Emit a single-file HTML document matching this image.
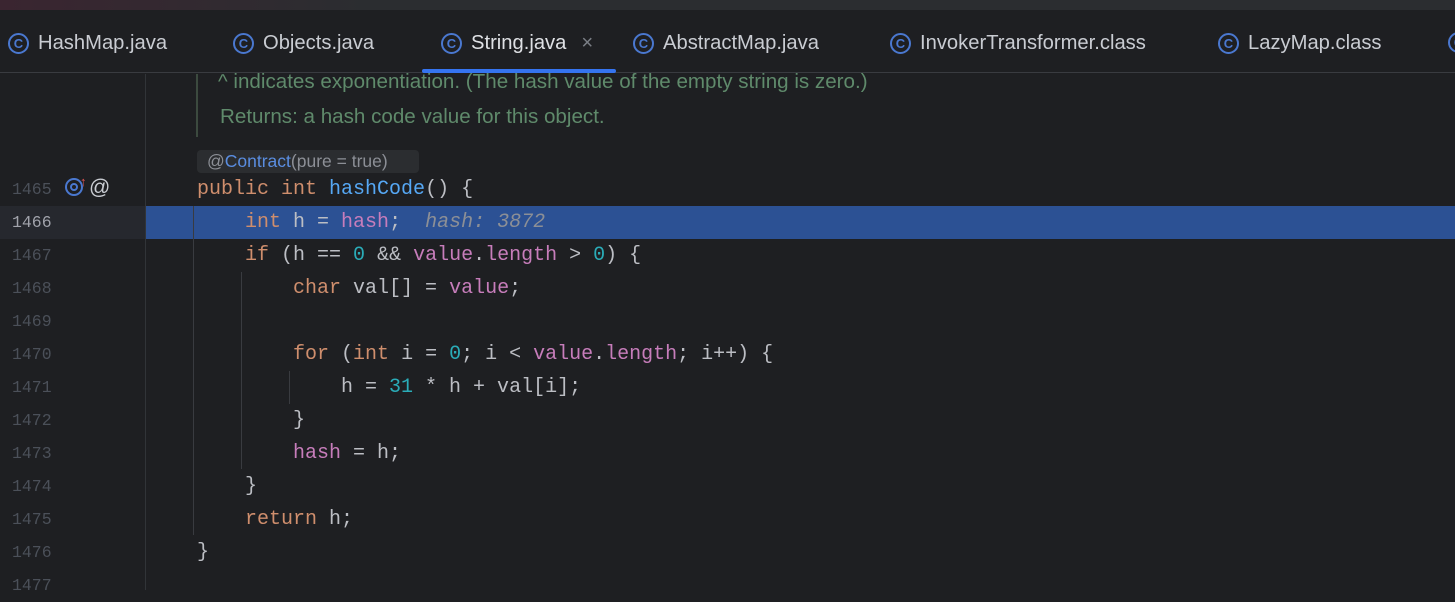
<!DOCTYPE html>
<html><head><meta charset="utf-8"><style>
*{margin:0;padding:0;box-sizing:border-box}
body{width:1455px;height:590px;overflow:hidden;background:#1e1f22;position:relative;font-family:"Liberation Sans",sans-serif}
.top{position:absolute;left:0;top:0;width:1455px;height:10px;background:linear-gradient(90deg,#3a2530 0%,#2b2d30 25%,#2b2d30 100%)}
.tabs{position:absolute;left:0;top:10px;width:1455px;height:63px;background:#1e1f22;border-bottom:1px solid #393b40}
.tab{position:absolute;top:22px;font-size:20.2px;color:#c9ccd2;white-space:nowrap;display:flex;align-items:center}
.ci{display:inline-block;width:21px;height:21px;border:2px solid #4a78d0;border-radius:50%;color:#4a78d0;font-size:13px;font-weight:bold;text-align:center;line-height:17px;margin-right:9px}
.ul{position:absolute;left:422px;top:69px;width:194px;height:4px;background:#3574f0;border-radius:2px}
.ln{position:absolute;left:12px;width:60px;font-family:"Liberation Mono",monospace;font-size:16.5px;color:#4b5059;height:33px;line-height:33px}
.code{position:absolute;font-family:"Liberation Mono",monospace;font-size:20px;color:#bcbec4;white-space:pre;height:33px;line-height:33px;left:197px}
.k{color:#cf8e6d}.m{color:#56a8f5}.f{color:#c77dbb}.n{color:#2aacb8}.h{color:#8c8f96;font-style:italic}
.doc{position:absolute;left:218px;font-size:20.6px;color:#5f8a6b;white-space:nowrap}
.g{position:absolute;width:1px;background:#393b40}
</style></head><body>
<div class="top"></div>
<div class="tabs">
<div class="tab" style="left:8px"><span class="ci">C</span>HashMap.java</div>
<div class="tab" style="left:233px"><span class="ci">C</span>Objects.java</div>
<div class="tab" style="left:441px;color:#dfe1e5"><span class="ci">C</span>String.java<span style="color:#7a7e85;margin-left:15px">×</span></div>
<div class="tab" style="left:633px"><span class="ci">C</span>AbstractMap.java</div>
<div class="tab" style="left:890px"><span class="ci">C</span>InvokerTransformer.class</div>
<div class="tab" style="left:1218px"><span class="ci">C</span>LazyMap.class</div>
<div class="tab" style="left:1448px"><span class="ci">C</span></div>
</div>
<div class="ul"></div>
<div style="position:absolute;left:145px;top:74px;width:1px;height:516px;background:#313438"></div>
<div style="position:absolute;left:0;top:206px;width:145px;height:33px;background:#26282e"></div>
<div style="position:absolute;left:146px;top:206px;width:1309px;height:33px;background:#2c5194"></div>
<div style="position:absolute;left:196px;top:74px;width:2px;height:63px;background:#3c4a3f"></div>
<div class="doc" style="top:70px">^ indicates exponentiation. (The hash value of the empty string is zero.)</div>
<div class="doc" style="top:105px;left:220px">Returns: a hash code value for this object.</div>
<div style="position:absolute;left:197px;top:150px;width:222px;height:23px;background:#2b2d30;border-radius:4px;font-size:17.5px;color:#8c8f96;line-height:23px;padding-left:10px;white-space:nowrap">@<span style="color:#5a8de0">Contract</span>(pure = true)</div>
<div class="g" style="left:193px;top:206px;height:329px"></div>
<div class="g" style="left:241px;top:272px;height:197px"></div>
<div class="g" style="left:289px;top:371px;height:33px"></div>
<div class="ln" style="top:173px">1465</div>
<div style="position:absolute;left:65px;top:178px;width:18px;height:18px;border:2px solid #4a78d0;border-radius:50%"></div>
<div style="position:absolute;left:70px;top:183px;width:8px;height:8px;border:2px solid #4a78d0;border-radius:50%"></div>
<div style="position:absolute;left:80px;top:174px;font-size:13px;color:#e05555;font-weight:bold">↑</div>
<div style="position:absolute;left:89px;top:176px;font-size:21px;color:#c9ccd2">@</div>
<div class="ln" style="top:206px;color:#a1a3ab">1466</div>
<div class="ln" style="top:239px">1467</div>
<div class="ln" style="top:272px">1468</div>
<div class="ln" style="top:305px">1469</div>
<div class="ln" style="top:338px">1470</div>
<div class="ln" style="top:371px">1471</div>
<div class="ln" style="top:404px">1472</div>
<div class="ln" style="top:437px">1473</div>
<div class="ln" style="top:470px">1474</div>
<div class="ln" style="top:503px">1475</div>
<div class="ln" style="top:536px">1476</div>
<div class="ln" style="top:569px">1477</div>
<div class="code" style="top:173px"><span class="k">public int</span> <span class="m">hashCode</span>() {</div>
<div class="code" style="top:206px">    <span class="k">int</span> h = <span class="f">hash</span>;  <span class="h">hash: 3872</span></div>
<div class="code" style="top:239px">    <span class="k">if</span> (h == <span class="n">0</span> &amp;&amp; <span class="f">value</span>.<span class="f">length</span> &gt; <span class="n">0</span>) {</div>
<div class="code" style="top:272px">        <span class="k">char</span> val[] = <span class="f">value</span>;</div>
<div class="code" style="top:338px">        <span class="k">for</span> (<span class="k">int</span> i = <span class="n">0</span>; i &lt; <span class="f">value</span>.<span class="f">length</span>; i++) {</div>
<div class="code" style="top:371px">            h = <span class="n">31</span> * h + val[i];</div>
<div class="code" style="top:404px">        }</div>
<div class="code" style="top:437px">        <span class="f">hash</span> = h;</div>
<div class="code" style="top:470px">    }</div>
<div class="code" style="top:503px">    <span class="k">return</span> h;</div>
<div class="code" style="top:536px">}</div>
</body></html>
